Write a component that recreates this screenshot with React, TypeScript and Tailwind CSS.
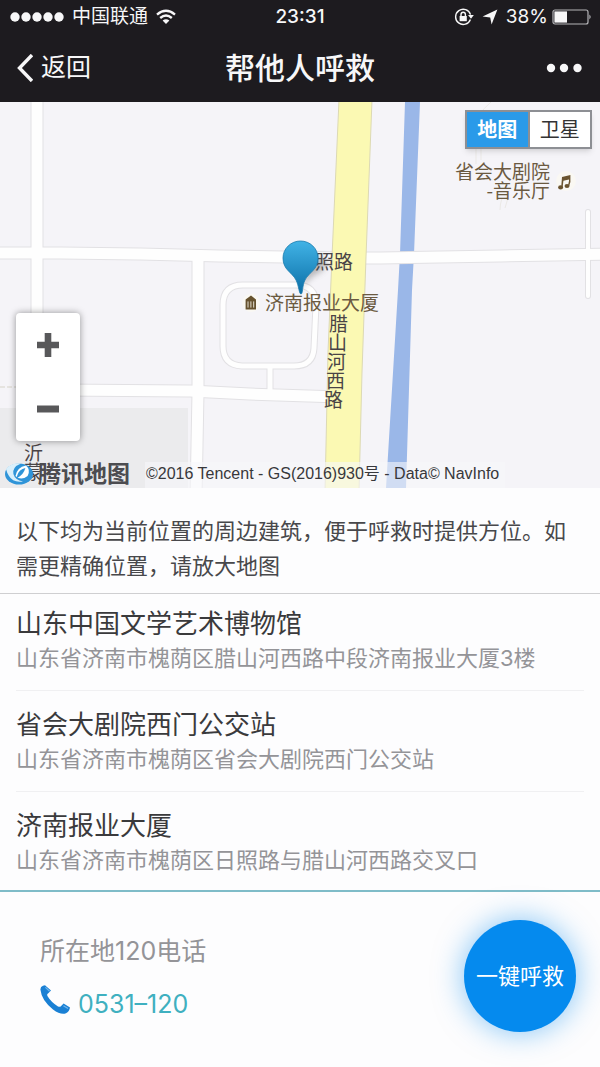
import { useState } from 'react';

type MapType = 'map' | 'satellite';

interface Place {
  name: string;
  address: string;
}

const places: Place[] = [
  { name: '山东中国文学艺术博物馆', address: '山东省济南市槐荫区腊山河西路中段济南报业大厦3楼' },
  { name: '省会大剧院西门公交站', address: '山东省济南市槐荫区省会大剧院西门公交站' },
  { name: '济南报业大厦', address: '山东省济南市槐荫区日照路与腊山河西路交叉口' },
];

const roads = [
  'M37 -10 V285',
  'M-10 151 H60 L140 152 L220 154 L345 156 H380 L500 154 L610 152',
  'M198 154 L198 290 L196 396',
  'M60 288 L190 289 L250 292 L340 295',
];

const lanes = [
  'M223 203 Q223 183 243 183 H296 Q316 183 316 203 L314 246 Q313 264 294 264 H242 Q223 263 223 244 Z',
  'M270 264 V293',
];

function StatusBar() {
  return (
    <div className="grid grid-cols-3 items-center h-[34px] px-2 text-[19px] leading-8">
      <div className="flex items-center gap-2">
        <svg width="56" height="10" viewBox="0 0 56 10" fill="currentColor">
          {[7, 18, 29, 40, 51].map((x) => (
            <circle key={x} cx={x} cy="5" r="4.7" />
          ))}
        </svg>
        <span className="whitespace-nowrap">中国联通</span>
        <svg width="20" height="16" viewBox="0 0 20 16" fill="none" stroke="currentColor" strokeWidth="2.4">
          <path d="M1 5.6 Q10 -2 19 5.6" />
          <path d="M4.2 9 Q10 4 15.8 9" />
          <path d="M10 15 L6.6 11.6 Q10 8.8 13.4 11.6 Z" fill="currentColor" stroke="none" />
        </svg>
      </div>
      <time className="text-center font-medium">23:31</time>
      <div className="flex items-center justify-end">
        <svg width="20" height="18" viewBox="0 0 20 18" fill="none" stroke="currentColor" strokeWidth="1.4" className="mr-2">
          <path d="M16.4 11.4 A7.6 7.6 0 1 1 16.5 6.6" />
          <path d="M14 7 H19.8 L17 10.8 Z" fill="currentColor" stroke="none" />
          <rect x="5.6" y="8" width="7.2" height="5.2" fill="currentColor" stroke="none" />
          <path d="M7 8 V6.4 A2.2 2.2 0 0 1 11.4 6.4 V8" />
        </svg>
        <svg width="16" height="16" viewBox="0 0 16 16" fill="currentColor" className="mr-2">
          <path d="M15.4 0.6 L9.6 15.4 L8.2 8.4 L0.6 7.4 Z" />
        </svg>
        <span className="mr-1">38%</span>
        <svg width="40" height="16" viewBox="0 0 40 16">
          <rect x="1" y="1" width="35" height="14" rx="2" fill="none" stroke="#b5b5b8" strokeWidth="1.2" />
          <rect x="2.4" y="2.4" width="12.6" height="11.2" fill="currentColor" />
          <path d="M37.4 5.6 Q40 8 37.4 10.4 Z" fill="#b5b5b8" />
        </svg>
      </div>
    </div>
  );
}

function NavBar() {
  return (
    <div className="grid grid-cols-[1fr_auto_1fr] items-center h-[68px] px-4">
      <button type="button" className="flex items-center gap-2 text-[25px]">
        <svg width="17" height="28" viewBox="0 0 17 28" fill="none" stroke="currentColor" strokeWidth="3.4">
          <path d="M16 1 L3.5 14 L16 27" />
        </svg>
        返回
      </button>
      <h1 className="text-[30px] leading-10 font-medium">帮他人呼救</h1>
      <button type="button" aria-label="更多" className="justify-self-end">
        <svg width="40" height="20" viewBox="0 0 40 20" fill="currentColor">
          <circle cx="7" cy="10" r="4.2" />
          <circle cx="20" cy="10" r="4.2" />
          <circle cx="33.5" cy="10" r="4.2" />
        </svg>
      </button>
    </div>
  );
}

function MapCanvas() {
  return (
    <svg
      viewBox="0 0 600 386"
      preserveAspectRatio="xMidYMid slice"
      className="block w-full h-full"
      fontFamily="'Noto Sans CJK SC', sans-serif"
      fontSize="19"
    >
      <defs>
        <linearGradient id="pin" x1="0" y1="0" x2="0" y2="1">
          <stop offset="0" stopColor="#41b3e6" />
          <stop offset="1" stopColor="#0b6ea6" />
        </linearGradient>
        <filter id="soft" x="-50%" y="-50%" width="200%" height="200%">
          <feGaussianBlur stdDeviation="3" />
        </filter>
      </defs>
      <rect width="600" height="386" fill="#f5f4f8" />
      <path d="M0 306 H188 V386 H0 Z" fill="#ebebed" />

      {/* river */}
      <path d="M405 0 H420 L414 152 L412 188 L406 386 H386 L398 188 L400 152 Z" fill="#9ab7e8" />

      {/* streets: grey casing first, white surface over it */}
      <g fill="none" stroke="#e2e1e4" strokeLinejoin="round">
        {lanes.map((d) => <path key={d} d={d} strokeWidth="7" />)}
        {roads.map((d) => <path key={d} d={d} strokeWidth="13" />)}
        <path d="M588 110 V194" strokeWidth="6" strokeLinecap="round" />
      </g>
      <g fill="none" stroke="#fefefe" strokeLinejoin="round">
        {lanes.map((d) => <path key={d} d={d} strokeWidth="5" />)}
        {roads.map((d) => <path key={d} d={d} strokeWidth="11" />)}
        <path d="M588 110 V194" strokeWidth="4" strokeLinecap="round" />
      </g>
      <path d="M0 285 H16" stroke="#d6d3c8" strokeDasharray="5 2" />
      <g fill="none" stroke="#ebe9e6">
        <path d="M491 0 Q484 6 478 14 M476 46 V62 M481 46 V58 M502 96 Q500 102 500 108 M508 96 L505 106" />
      </g>

      {/* main road */}
      <path
        d="M339 -2 H372 L366 155 L362 270 L359 390 H325 L328 250 L332 155 Z"
        fill="#fbf9b3"
        stroke="#dcd9b4"
      />
      <path d="M145 360 H505 V386 H145 Z" fill="#f7f7fa" fillOpacity="0.6" />

      <g fill="#4a4446">
        <text x="315" y="167">照路</text>
        <text x="329" y="229">腊</text>
        <text x="328" y="248">山</text>
        <text x="327" y="267">河</text>
        <text x="326" y="286">西</text>
        <text x="324" y="305">路</text>
        <text x="24" y="358">沂</text>
        <text x="24" y="377">蒙</text>
      </g>
      <g fill="#6b5a41">
        <text x="265" y="208">济南报业大厦</text>
        <text x="550" y="77" textAnchor="end">省会大剧院</text>
        <text x="550" y="96" textAnchor="end">-音乐厅</text>
      </g>

      {/* museum and music markers */}
      <circle cx="251" cy="201" r="9" fill="#faf8f3" />
      <path d="M251 193.6 L256 197.4 V207.6 H245.6 V197.4 Z" fill="#66522f" />
      <path d="M248 199.4 V205.6 M250.9 199.4 V205.6 M253.7 199.4 V205.6" stroke="#f4efe4" strokeWidth="0.9" />
      <circle cx="566" cy="79" r="10" fill="#faf8f3" />
      <g fill="#6b5430">
        <ellipse cx="560.6" cy="85.4" rx="2.5" ry="2.1" />
        <ellipse cx="567" cy="84" rx="2.5" ry="2.1" />
        <path d="M562 75 L570.4 73 V80 L569 84.4 H567.8 L569 79 V77.4 L563.4 78.8 L562.6 85.4 H561.2 Z" />
      </g>

      {/* location pin */}
      <path d="M301 190 Q306 176 320 170 Q332 160 322 154 Q310 156 304 174 Z" fill="#555" opacity="0.4" filter="url(#soft)" />
      <path
        d="M301 192 C299 192 299 184 296 178 C292 170 283 168 283 156 A17.5 17 0 0 1 318 156 C318 168 309 170 305 178 C302 184 303 192 301 192 Z"
        fill="url(#pin)"
        stroke="#1c7cae"
        strokeWidth="0.8"
      />
    </svg>
  );
}

function MapPanel() {
  const [mapType, setMapType] = useState<MapType>('map');
  const [zoom, setZoom] = useState(16);

  return (
    <section className="relative h-[386px] overflow-hidden" data-zoom={zoom}>
      <MapCanvas />

      <div className="absolute top-2 right-2 flex h-[39px] w-[127px] border-2 border-[#8d8f94] bg-white text-[20px] shadow-md">
        <button
          type="button"
          onClick={() => setMapType('map')}
          className={mapType === 'map' ? 'flex-1 bg-[#2a9ae9] font-bold text-white' : 'flex-1 text-[#333]'}
        >
          地图
        </button>
        <button
          type="button"
          onClick={() => setMapType('satellite')}
          className={
            mapType === 'satellite'
              ? 'flex-1 border-l-2 border-[#8d8f94] bg-[#2a9ae9] font-bold text-white'
              : 'flex-1 border-l-2 border-[#8d8f94] text-[#333]'
          }
        >
          卫星
        </button>
      </div>

      <div className="absolute left-4 bottom-[47px] flex h-32 w-16 flex-col rounded-sm bg-white shadow-[0_0_7px_rgba(0,0,0,0.4)]">
        <button type="button" aria-label="放大" onClick={() => setZoom(zoom + 1)} className="flex flex-1 items-center justify-center">
          <svg width="24" height="24" viewBox="0 0 24 24" stroke="#58585a" strokeWidth="6.6">
            <path d="M1 12 H23 M12 0 V24" />
          </svg>
        </button>
        <button type="button" aria-label="缩小" onClick={() => setZoom(zoom - 1)} className="flex flex-1 items-center justify-center">
          <svg width="24" height="24" viewBox="0 0 24 24" stroke="#58585a" strokeWidth="7">
            <path d="M1 12 H23" />
          </svg>
        </button>
      </div>

      <div className="absolute left-1 bottom-0 flex h-7 items-center gap-4 whitespace-nowrap">
        <div className="flex items-center">
          <svg width="34" height="24" viewBox="0 0 34 24">
            <ellipse cx="15" cy="12" rx="14" ry="10.5" fill="#2f94d8" />
            <path d="M2 7 Q7 0.5 17 1.4 Q8 5 9.4 12 Q11 18 19 19.4 Q9 21 5 14 Q3 11 2 7 Z" fill="#d9effb" />
            <path d="M11.5 14 Q13 5 22 3.4 Q27 8 23.6 14 Q17 19 11.5 14 Z" fill="#fff" />
            <path d="M12.5 16.4 Q19.6 13 21.4 6 Q15 7.6 13.4 13 Z" fill="#2f94d8" />
          </svg>
          <span className="text-[23px] leading-7 font-bold text-[#4c4c50]">腾讯地图</span>
        </div>
        <small className="font-['Liberation_Sans','Noto_Sans_CJK_SC',sans-serif] text-base leading-7 text-[#38383b]">
          ©2016 Tencent - GS(2016)930号 - Data© NavInfo
        </small>
      </div>
    </section>
  );
}

function PlaceList() {
  return (
    <ul className="px-4">
      {places.map((place) => (
        <li key={place.name} className="border-b border-[#f0f0f2] py-4 first:pt-3 last:border-b-0 last:pb-3.5">
          <h2 className="text-[26px] leading-9 text-[#3a3a3c]">{place.name}</h2>
          <p className="text-[22px] leading-8 text-[#949498]">{place.address}</p>
        </li>
      ))}
    </ul>
  );
}

function EmergencyFooter() {
  return (
    <footer className="flex items-center justify-between border-t-2 border-[#7fbcc8] pt-7 pr-6 pb-9 pl-10">
      <div className="flex flex-col gap-4 pt-1">
        <p className="text-[25px] leading-9 text-[#949498]">所在地120电话</p>
        <a href="tel:0531-120" className="flex items-center gap-2 text-[25px] leading-9 text-[#3fb0c0]">
          <svg width="30" height="30" viewBox="0 0 30 30" fill="#1a80d4" className="mb-2">
            <path d="M0.5 5 Q0 2 3 0.8 L5 0.3 L11 5.4 L8 8.6 Q6.6 9.2 7.6 11.2 Q11 17 18 21.4 Q20.4 22.6 21.6 20.6 L23.6 18.6 L30 22.6 Q29.4 26.6 26 28.2 Q21 30.4 13 24.4 Q1.6 15.4 0.5 5 Z" />
            <path d="M5.4 2.4 L9.6 6.2 M23.4 20.8 L28 23.6" stroke="#6fb6ee" strokeWidth="1.2" />
          </svg>
          0531–120
        </a>
      </div>
      <button
        type="button"
        className="size-28 rounded-full bg-[#058aee] text-[22px] whitespace-nowrap text-white shadow-[0_0_30px_rgba(5,138,238,0.5)]"
      >
        一键呼救
      </button>
    </footer>
  );
}

export default function App() {
  return (
    <div className="min-h-screen bg-[#fdfdfe] font-['Inter','Noto_Sans_CJK_SC',sans-serif]">
      <header className="bg-[#1d1b1f] text-[#f7f7f8]">
        <StatusBar />
        <NavBar />
      </header>
      <main>
        <MapPanel />
        <p className="border-b border-[#cfcfd1] px-4 pt-[26px] pb-[9px] text-[22px] leading-[35px] text-[#48484b]">
          以下均为当前位置的周边建筑，便于呼救时提供方位。如需更精确位置，请放大地图
        </p>
        <PlaceList />
      </main>
      <EmergencyFooter />
    </div>
  );
}
